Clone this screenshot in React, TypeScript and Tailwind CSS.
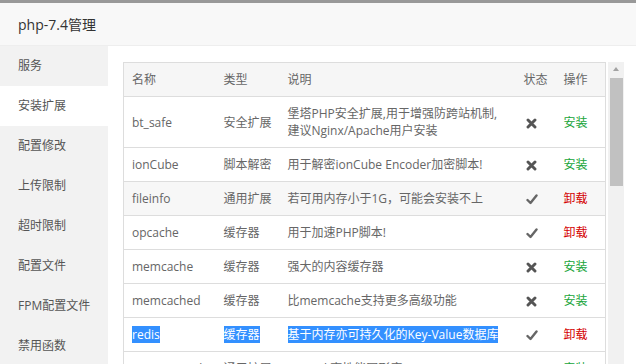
import React from 'react';

const menu = ['服务', '安装扩展', '配置修改', '上传限制', '超时限制', '配置文件', 'FPM配置文件', '禁用函数'];

interface Ext {
  name: string;
  type: string;
  desc: React.ReactNode;
  installed: boolean;
  hover?: boolean;
  selected?: boolean;
}

const rows: Ext[] = [
  {
    name: 'bt_safe',
    type: '安全扩展',
    desc: (
      <>
        堡塔PHP安全扩展,用于增强防跨站机制,
        <br />
        建议Nginx/Apache用户安装
      </>
    ),
    installed: false,
  },
  { name: 'ionCube', type: '脚本解密', desc: '用于解密ionCube Encoder加密脚本!', installed: false },
  { name: 'fileinfo', type: '通用扩展', desc: '若可用内存小于1G，可能会安装不上', installed: true, hover: true },
  { name: 'opcache', type: '缓存器', desc: '用于加速PHP脚本!', installed: true },
  { name: 'memcache', type: '缓存器', desc: '强大的内容缓存器', installed: false },
  { name: 'memcached', type: '缓存器', desc: '比memcache支持更多高级功能', installed: false },
  { name: 'redis', type: '缓存器', desc: '基于内存亦可持久化的Key-Value数据库', installed: true, selected: true },
  { name: 'imagemagick', type: '通用扩展', desc: 'Imagick高性能图形库', installed: false },
];

// 未安装：粗叉
const Cross = () => (
  <svg width="11" height="11" viewBox="0 0 12 12" className="inline-block">
    <path d="M2.2 2.2 L9.8 9.8 M9.8 2.2 L2.2 9.8" stroke="#555" strokeWidth="3.2" strokeLinecap="round" />
  </svg>
);

// 已安装：对勾
const Check = () => (
  <svg width="12" height="11" viewBox="0 0 12 11" className="inline-block">
    <path d="M1.5 6 L4.5 9 L10.5 1.5" stroke="#666" strokeWidth="2.4" fill="none" strokeLinecap="round" strokeLinejoin="round" />
  </svg>
);

const Sel: React.FC<{ on?: boolean; children: React.ReactNode }> = ({ on, children }) =>
  on ? <span className="bg-[#3390ff] text-white">{children}</span> : <>{children}</>;

export default function App() {
  return (
    <div
      className="w-[636px] h-[364px] overflow-hidden bg-white flex flex-col border-t-[3px] border-[#999]"
      style={{ fontFamily: '"Open Sans", "Noto Sans CJK SC", sans-serif' }}
    >
      {/* 标题栏 */}
      <div className="h-[43px] shrink-0 bg-[#f8f8f8] border-b border-[#eee] flex items-center pl-[18px] text-[14px] text-[#333]">
        php-7.4管理
      </div>

      <div className="flex flex-1 min-h-0">
        {/* 左侧菜单 */}
        <div className="w-[108px] shrink-0 bg-[#f2f2f2] flex flex-col">
          {menu.map((m, i) => (
            <div
              key={m}
              className={`h-[40px] shrink-0 flex items-center pl-[18px] text-[12px] text-[#555] ${
                i === 1 ? 'bg-white' : ''
              }`}
            >
              {m}
            </div>
          ))}
        </div>

        {/* 内容 */}
        <div className="flex-1 pt-[16px] pl-[15px] flex items-start">
          <table className="w-[482px] table-fixed border-collapse text-[12px] text-[#666] leading-[17px]">
            <colgroup>
              <col className="w-[92px]" />
              <col className="w-[64px]" />
              <col className="w-[236px]" />
              <col className="w-[40px]" />
              <col className="w-[50px]" />
            </colgroup>
            <thead>
              <tr className="bg-[#f6f6f6] border border-[#ddd]">
                <th className="text-left font-normal px-[8px] py-[8px]">名称</th>
                <th className="text-left font-normal px-[8px] py-[8px]">类型</th>
                <th className="text-left font-normal px-[8px] py-[8px]">说明</th>
                <th className="text-left font-normal px-[8px] py-[8px]">状态</th>
                <th className="text-left font-normal px-[8px] py-[8px]">操作</th>
              </tr>
            </thead>
            <tbody>
              {rows.map((r) => (
                <tr key={r.name} className={`border border-[#ddd] ${r.hover ? 'bg-[#f7f7f7]' : ''}`}>
                  <td className="px-[8px] py-[8px] whitespace-nowrap overflow-hidden">
                    <Sel on={r.selected}>{r.name}</Sel>
                  </td>
                  <td className="px-[8px] py-[8px] whitespace-nowrap">
                    <Sel on={r.selected}>{r.type}</Sel>
                  </td>
                  <td className="px-[8px] py-[8px] whitespace-nowrap">
                    <Sel on={r.selected}>{r.desc}</Sel>
                  </td>
                  <td className="px-[8px] py-[8px]">
                    <span className="pl-[2px]">{r.installed ? <Check /> : <Cross />}</span>
                  </td>
                  <td className="px-[8px] py-[8px]">
                    {r.installed ? (
                      <span className="text-[#d40000]">卸载</span>
                    ) : (
                      <span className="text-[#20a53a]">安装</span>
                    )}
                  </td>
                </tr>
              ))}
            </tbody>
          </table>

          {/* 滚动条 */}
          <div className="ml-[2px] w-[16px] h-[320px] bg-[#f1f1f1] flex flex-col items-center">
            <div className="h-[14px] flex items-center justify-center">
              <div className="w-0 h-0 border-l-[3px] border-r-[3px] border-b-[4px] border-l-transparent border-r-transparent border-b-[#a3a3a3]" />
            </div>
            <div className="mt-[2px] w-[13px] h-[108px] bg-[#c1c1c1]" />
          </div>
        </div>
      </div>
    </div>
  );
}
